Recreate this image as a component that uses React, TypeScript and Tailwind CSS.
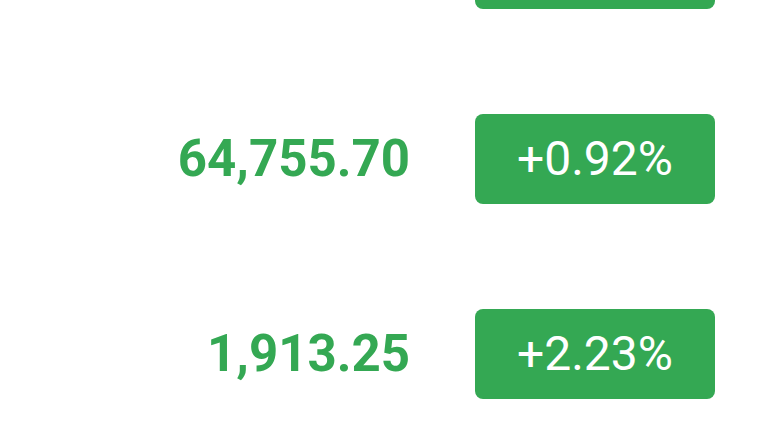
const rows = [
  { price: "67,120.40", change: "+1.15%" },
  { price: "64,755.70", change: "+0.92%" },
  { price: "1,913.25", change: "+2.23%" },
];

export default function App() {
  return (
    <div className="h-[427px] w-full overflow-hidden bg-white font-['Roboto',sans-serif]">
      <div className="mt-[-134px] flex flex-col">
        {rows.map((row) => (
          <div key={row.price} className="flex h-[195px] items-center justify-end gap-[65px] pr-[44px]">
            <span className="text-right text-[51px] font-bold leading-none text-[#34a853]">{row.price}</span>
            <div className="flex h-[90px] w-[240px] items-center justify-center rounded-[8px] bg-[#34a853] pt-[1px] text-[48px] leading-none text-white">
              {row.change}
            </div>
          </div>
        ))}
      </div>
    </div>
  );
}
